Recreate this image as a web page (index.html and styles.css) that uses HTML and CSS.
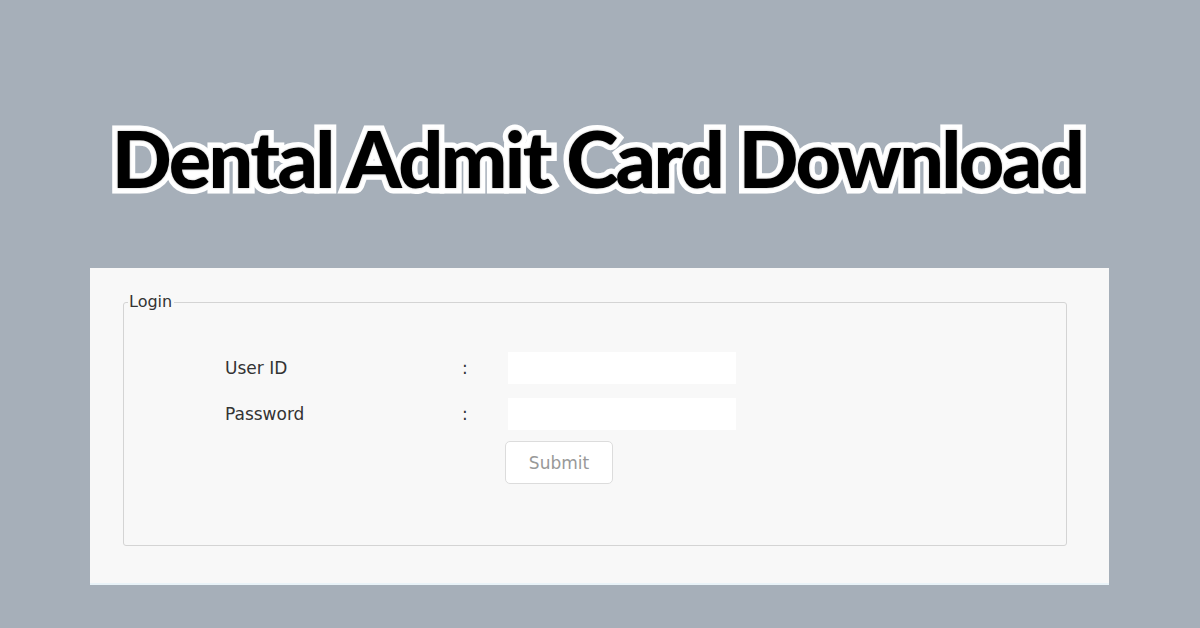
FILE: index.html
```html
<!DOCTYPE html>
<html>
<head>
<meta charset="utf-8">
<link rel="stylesheet" href="styles.css">
</head>
<body>
<header class="hero">
  <h1 class="title">Dental Admit Card Download</h1>
</header>
<section class="panel">
  <fieldset class="login">
    <legend class="legend">Login</legend>
    <div class="form">
      <label class="lbl">User ID</label>
      <span class="colon">:</span>
      <input class="field" type="text">
      <label class="lbl">Password</label>
      <span class="colon">:</span>
      <input class="field" type="password">
      <span></span>
      <span></span>
      <button class="submit" type="button">Submit</button>
    </div>
  </fieldset>
</section>
</body>
</html>
```
FILE: styles.css
```css
html, body {
  margin: 0;
  padding: 0;
}
body {
  width: 1200px;
  height: 628px;
  overflow: hidden;
  background: #a6afb9;
  font-family: "DejaVu Sans", Verdana, sans-serif;
}
.hero {
  height: 268px;
  display: flex;
  align-items: flex-start;
  justify-content: center;
}
.title {
  margin: 108px 0 0 -6px;
  font-family: "Lato", "Open Sans", sans-serif;
  font-weight: 900;
  font-size: 79px;
  line-height: 100px;
  color: #000;
  -webkit-text-stroke: 11px #fff;
  paint-order: stroke fill;
  text-shadow: 0 0 2px rgba(0,0,0,0.35);
  letter-spacing: -2.6px;
  white-space: nowrap;
}
.panel {
  margin-left: 90px;
  width: 1019px;
  height: 317px;
  background: #f8f8f8;
  box-sizing: border-box;
  padding: 24px 42px 39px 33px;
  border-bottom: 2px solid #e9f3f8;
}
.login {
  margin: 0;
  height: 254px;
  box-sizing: border-box;
  border: 1px solid #d4d4d4;
  border-radius: 3px;
  padding: 0;
}
.legend {
  padding: 0 2px 0 1px;
  margin-left: 4px;
  font-size: 16px;
  color: #333;
  line-height: 20px;
}
.form {
  display: grid;
  grid-template-columns: 237px 46px 228px;
  grid-auto-rows: 32px;
  row-gap: 14px;
  margin-left: 101px;
  margin-top: 40px;
  align-items: center;
}
.lbl {
  font-size: 17px;
  color: #333;
}
.colon {
  font-size: 17px;
  color: #333;
}
.field {
  width: 228px;
  height: 32px;
  box-sizing: border-box;
  border: none;
  background: #fff;
  margin: 0;
  padding: 0;
}
.submit {
  justify-self: start;
  align-self: start;
  margin-top: -3px;
  margin-left: -3px;
  width: 108px;
  height: 43px;
  background: #fff;
  border: 1px solid #dcdcdc;
  border-radius: 5px;
  font-family: "DejaVu Sans", Verdana, sans-serif;
  font-size: 17px;
  color: #999;
}
```
